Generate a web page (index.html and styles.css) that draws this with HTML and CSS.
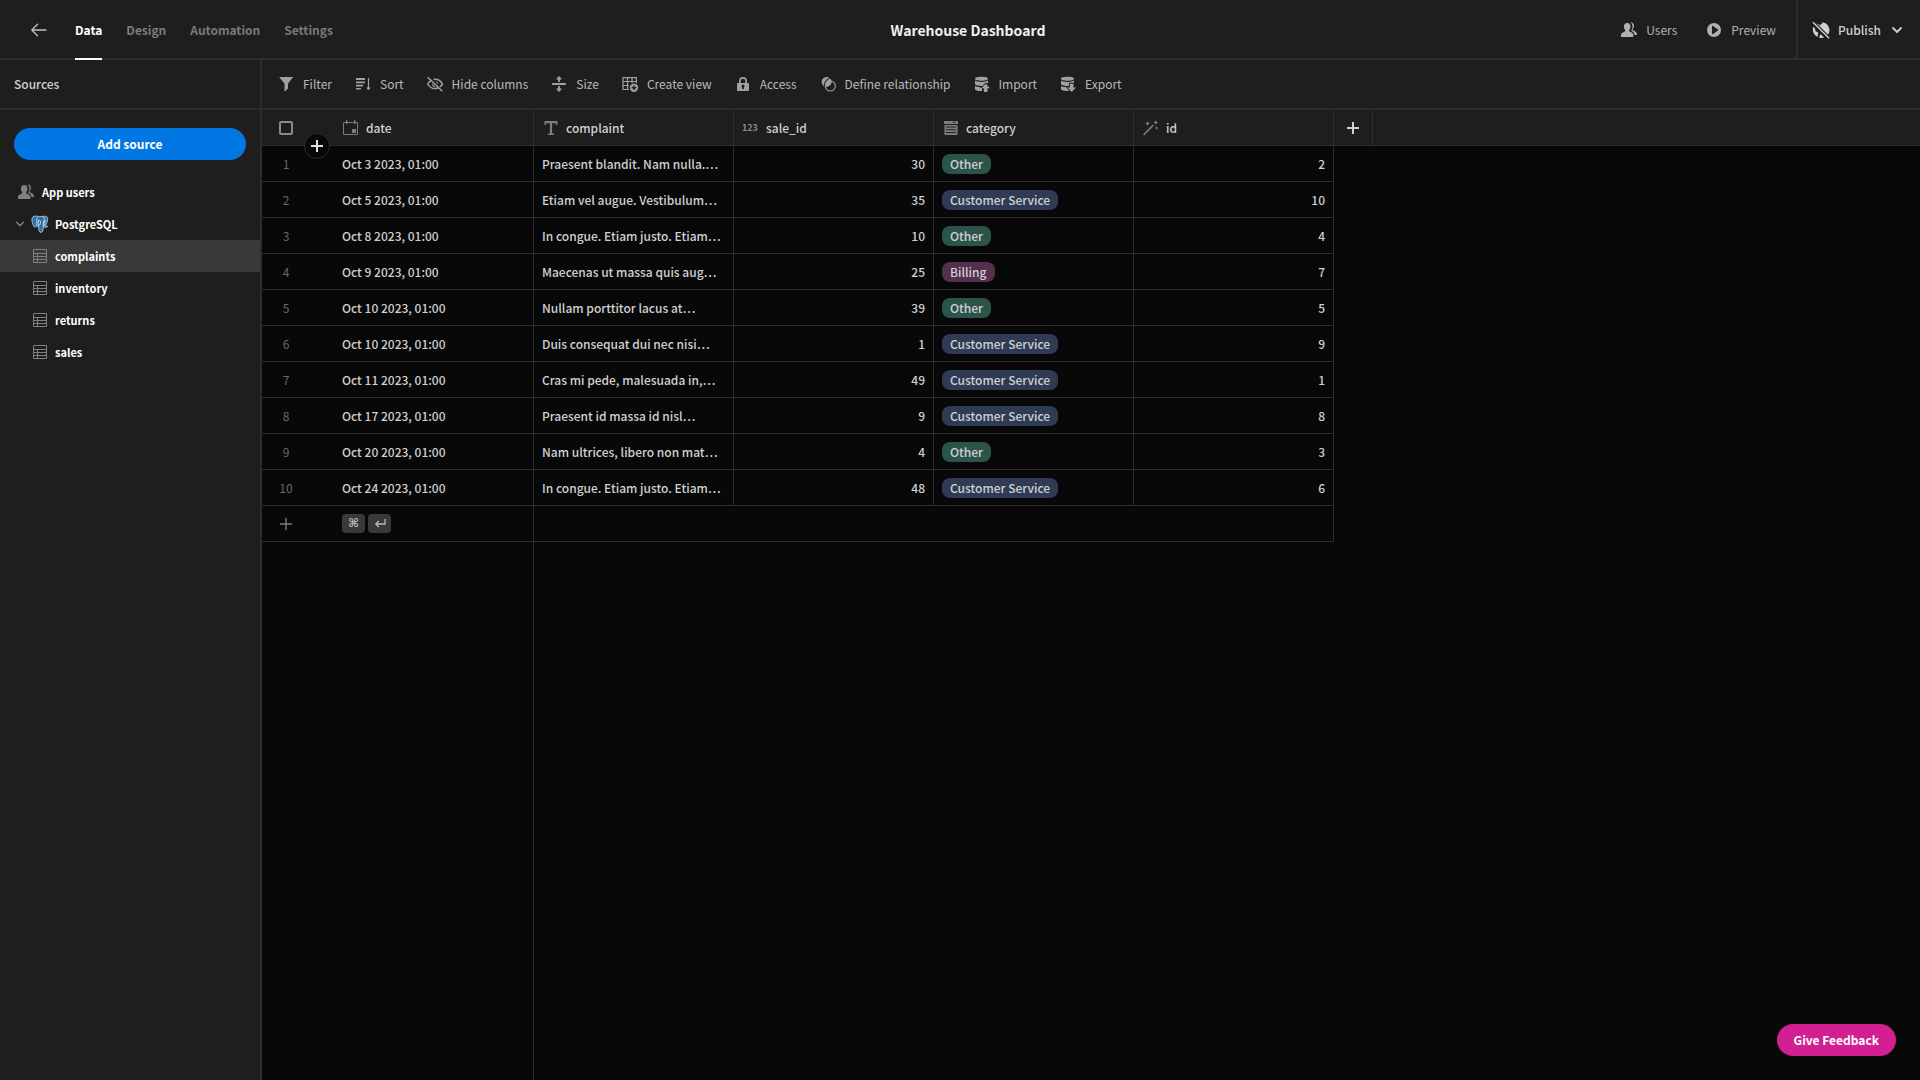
FILE: index.html
```html
<!DOCTYPE html>
<html lang="en">
<head>
<meta charset="utf-8">
<title>Warehouse Dashboard</title>
<link rel="stylesheet" href="styles.css">
</head>
<body>
<svg class="sprite" aria-hidden="true">
  <symbol id="i-users" viewBox="0 0 18 18">
    <path d="M7.300 2c2 0 3.200 1.300 3.200 3.600 0 1.400-.5 2.600-1.200 3.400-.3.400-.3 1.300.2 1.500 2.500.9 3.900 1.600 3.900 3.700V16H1v-1.800c0-2.100 1.500-2.800 3.900-3.700.6-.2.600-1.100.2-1.500-.7-.8-1.200-2-1.200-3.400C3.900 3.300 5.200 2 7.300 2z"/>
    <path d="M10.400 1.600c2.200-.3 3.600 1.100 3.600 3.300 0 1.300-.4 2.300-1.100 3.100-.4.500-.3 1.300.3 1.500 2.100.8 3.800 1.600 3.800 4v.5h-2.500c-.2-2.300-1.600-3.400-3.400-4.200.9-1 1.400-2.500 1.400-4.200 0-1.700-.7-3.100-2.100-4z"/>
  </symbol>
  <symbol id="i-table" viewBox="0 0 18 18">
    <path fill="none" stroke="currentColor" d="M2.500 2.500h13v13h-13zM2.500 6.500h13M2.500 9.500h13M2.500 12.500h13M6.500 6.500v9"/>
  </symbol>
  <symbol id="i-chevron" viewBox="0 0 12 12">
    <path fill="none" stroke="currentColor" stroke-width="1.800" stroke-linecap="round" stroke-linejoin="round" d="M2 4l4 4 4-4"/>
  </symbol>
  <symbol id="i-plus" viewBox="0 0 12 12"><path d="M5 0h2v5h5v2H7v5H5V7H0V5h5z"/></symbol>
</svg>

<header class="topbar">
  <nav class="tabs" aria-label="Builder">
    <a class="back" href="#" aria-label="Back"><svg width="16" height="14" viewBox="0 0 16 14"><path fill="none" stroke="currentColor" stroke-width="1.300" stroke-linecap="round" stroke-linejoin="round" d="M15 7H1M6.500 1.200L.8 7l5.700 5.800"/></svg></a>
    <a class="tab is-active" href="#">Data</a>
    <a class="tab" href="#">Design</a>
    <a class="tab" href="#">Automation</a>
    <a class="tab" href="#">Settings</a>
  </nav>
  <h1 class="title">Warehouse Dashboard</h1>
  <div class="actions">
    <button class="action"><svg class="icon"><use href="#i-users"/></svg>Users</button>
    <button class="action"><svg class="icon" viewBox="0 0 18 18"><path fill-rule="evenodd" d="M9 2a7 7 0 1 0 0 14A7 7 0 0 0 9 2zM7 5.200c0-.4.400-.6.700-.4L13 8.600c.3.200.3.600 0 .8l-5.300 3.800c-.3.200-.7 0-.7-.4z"/></svg>Preview</button>
    <button class="action publish"><svg class="icon" viewBox="0 0 18 18"><path d="M4.500 2.900L15.800 14A8 8 0 0 0 10 1.200c.9 1 .4 1.600-.8 1.700-.9.100-.3 1.500-1.400 1.500C6.900 4.400 6.500 1.900 4.500 2.900zM1.500 5.500A8 8 0 0 0 5.500 16c.6-1.200-.3-2 .6-3 .6-.7-.2-1.900-1.300-2.200-1.300-.4-1.800-1.400-1.300-2.300zM7.500 16.900c1.600.3 3.200.2 4.500-.4l-3.200-3.200c-.9.600-1.600 1.900-1.300 3.600z"/><path fill="none" stroke="currentColor" stroke-width="1.500" d="M1 1.200L17.200 17.200"/><path fill="none" stroke="#1e1e1e" stroke-width="1" d="M2.500 .8L17.500 15.700"/></svg>Publish<svg class="caret"><use href="#i-chevron"/></svg></button>
  </div>
</header>

<div class="workspace">
  <aside class="sidebar">
    <h2 class="side-head">Sources</h2>
    <button class="add-source">Add source</button>
    <nav class="sources" aria-label="Sources">
      <a class="source" href="#"><svg class="icon"><use href="#i-users"/></svg>App users</a>
      <a class="source group" href="#"><svg class="arrow"><use href="#i-chevron"/></svg><svg class="icon" viewBox="0 0 18 18"><path fill="#2a6fa5" stroke="#c9d3da" stroke-width=".8" d="M3.200 1.300C1.300 1.700.7 3.500 1 5.600c.3 2.300 1.300 5.600 2.600 6.400.8.500 1.500-.3 2.100-1 .7.500 1.300.600 2 .5-.1 2.200.2 5.900 2.200 5.900 2.100 0 2.200-2.700 2.400-5.200 1.700.2 3.500 0 4.500-.9-1-.1-1.900 0-2.500-.3 1.800-2.600 3.200-7.300 2-8.700-1.300-1.400-3.200-1.300-4.500-.8-1.200-.3-2.400-.3-3.400.2-1.600-.5-3.600-.8-5.200-.4z"/><path fill="none" stroke="#dce4ea" stroke-width=".9" d="M6.400 2.800C4.900 4.600 6.300 7.400 5.700 10.800M7.700 11.300c-.8-2.200-.3-3.700-.3-5.700 1-.6 2.100-.2 2.100 1 0 1.500-.2 2.700-.9 3.700M11.800 1.700c2 1.500 2.500 4 2.100 5.600-.2 1.200-.4 2.200.2 3.500M12.300 12V6c.7-.5 1.500-.3 1.700.3"/></svg>PostgreSQL</a>
      <a class="source child is-active" href="#"><svg class="icon"><use href="#i-table"/></svg>complaints</a>
      <a class="source child" href="#"><svg class="icon"><use href="#i-table"/></svg>inventory</a>
      <a class="source child" href="#"><svg class="icon"><use href="#i-table"/></svg>returns</a>
      <a class="source child" href="#"><svg class="icon"><use href="#i-table"/></svg>sales</a>
    </nav>
  </aside>

  <main class="content">
    <div class="toolbar">
      <button class="tool"><svg class="icon" viewBox="0 0 18 18"><path d="M2.700 2h12.900c.3 0 .4.300.2.500L11 8.600v5L8 16.400c-.2.200-.5.100-.5-.2V8.600L2.500 2.500c-.2-.2-.1-.5.200-.5z"/></svg>Filter</button>
      <button class="tool"><svg class="icon" viewBox="0 0 18 18"><path d="M2 3h9v2H2zM2 6.500h9v1.700H2zM2 9.700h7v1.700H2zM2 12.900h5v1.700H2z"/><path fill="none" stroke="currentColor" stroke-width="1.200" d="M14.500 3v11M12.900 12.500l1.600 1.800 1.600-1.800"/></svg>Sort</button>
      <button class="tool"><svg class="icon" viewBox="0 0 18 18"><path fill="none" stroke="currentColor" stroke-width="1.500" d="M5.700 5C3.800 5.900 2.500 7.500 1.700 9c1.500 2.700 4.200 4.600 7.400 4.600 1 0 2-.2 2.900-.6M7.500 4.500c3.900-.8 7.200 1.500 8.900 4.500-.7 1.200-1.600 2.200-2.600 3M1.700 2.200l14.600 14"/><path d="M9.200 6A3 3 0 0 1 12 9.200L10.700 8c.2-.9-.5-1.600-1.500-2zM6 8.400l3.600 3.500A3 3 0 0 1 6 8.400z"/></svg>Hide columns</button>
      <button class="tool"><svg class="icon" viewBox="0 0 18 18"><path d="M2.500 8h13c.7 0 .7 2 0 2h-13c-.7 0-.7-2 0-2zM9 1l3.200 3.500H9.900V7H8.100V4.500H5.800zM9 17l3.200-3.500H9.900V11H8.100v2.500H5.800z"/></svg>Size</button>
      <button class="tool"><svg class="icon" viewBox="0 0 18 18"><path fill="none" stroke="currentColor" stroke-width="1.200" d="M8 14.500H2V2.600h13.400V8M2 6.500h13.400M2 10.500h6M6.500 2.600v11.900M11 2.600V8"/><path fill-rule="evenodd" d="M13 8.600a4.200 4.200 0 1 0 0 8.400 4.200 4.200 0 0 0 0-8.400zm-.7 1.900h1.400v1.600h1.600v1.400h-1.600v1.600h-1.400v-1.600h-1.600v-1.400h1.600z"/></svg>Create view</button>
      <button class="tool"><svg class="icon" viewBox="0 0 18 18"><path fill-rule="evenodd" d="M14.500 8H13V6a4 4 0 0 0-8 0v2H3.500a.5.500 0 0 0-.5.500v7c0 .3.200.5.500.5h11c.3 0 .5-.2.500-.5v-7a.5.500 0 0 0-.5-.5zM6.700 6a2.300 2.300 0 0 1 4.600 0v2H6.700zM9.900 12.400V14H8.100v-1.600a1.500 1.500 0 1 1 1.800 0z"/></svg>Access</button>
      <button class="tool"><svg class="icon" viewBox="0 0 18 18"><path d="M10.700 3A5 5 0 1 0 5 11.200C4.700 7 7 4 10.700 3zM6.400 11.500a5 5 0 0 0 5.300-7.700 6 6 0 0 0-5.300 7.700z"/><circle cx="11.300" cy="11" r="5" fill="none" stroke="currentColor" stroke-width="1.100"/></svg>Define relationship</button>
      <button class="tool"><svg class="icon" viewBox="0 0 18 18"><path d="M8.500 1.700C12.400 1.700 15 2.500 15 3.700s-2.600 2-6.500 2-6.500-.8-6.500-2 2.600-2 6.500-2zM2 5.600c1 .9 3.500 1.400 6.500 1.400 2.900 0 5.500-.5 6.500-1.400v3L12.600 7.700 9.500 10.900C6 11 2.600 10.400 2 9.200zM2 11c1 .7 3 1.200 5.500 1.200L7 13h2v3c-3.500.2-7-.5-7-2z"/><path d="M12.700 8.700l4.300 4.600h-2.500V17h-3.600v-3.700H8.400z"/></svg>Import</button>
      <button class="tool"><svg class="icon" viewBox="0 0 18 18"><path d="M8.500 1.700C12.400 1.700 15 2.500 15 3.700s-2.600 2-6.500 2-6.500-.8-6.500-2 2.600-2 6.500-2zM2 5.600c1 .9 3.500 1.400 6.500 1.400 2.900 0 5.500-.5 6.500-1.400v2.100H10V11c-4 .1-7.400-.6-8-1.800zM2 11c1 .7 3 1.200 5.500 1.200l2.500 3.700c-4 .3-8-.4-8-1.900z"/><path d="M12.700 17l4.300-4.600h-2.500V8.700h-3.600v3.700H8.400z"/></svg>Export</button>
    </div>

    <table class="grid">
      <colgroup><col class="c-gutter"><col class="c-data"><col class="c-data"><col class="c-data"><col class="c-data"><col class="c-data"><col class="c-add"><col></colgroup>
      <thead>
        <tr>
          <th class="gutter"><input class="check" type="checkbox" aria-label="Select all rows"><button class="insert" aria-label="Add row"><svg class="plus-sm"><use href="#i-plus"/></svg></button></th>
          <th scope="col"><span class="head"><svg class="icon" viewBox="0 0 18 18"><path fill="none" stroke="currentColor" d="M1.500 3.500h14v12h-14z"/><path d="M4 1h1.400v4H4zM12 1h1.400v4H12zM10 10h4v4h-4z"/></svg>date</span></th>
          <th scope="col"><span class="head"><svg class="icon" viewBox="0 0 18 18"><path d="M2.500 2h13v4h-1.500l-.4-1.800h-3.500v10l2 .5V16H5.900v-1.300l2-.5v-10H4.400L4 6H2.500z"/></svg>complaint</span></th>
          <th scope="col"><span class="head"><span class="digits">123</span>sale_id</span></th>
          <th scope="col"><span class="head"><svg class="icon" viewBox="0 0 18 18"><path fill-rule="evenodd" d="M2 2h14v3H2zM10.500 2.700l1.500 1.500 1.500-1.500zM2.500 6h13v10h-13zM4 7.500v1h10v-1zM4 10.300v1h10v-1zM4 13.100v1h10v-1z"/></svg>category</span></th>
          <th scope="col"><span class="head"><svg class="icon" viewBox="0 0 18 18"><path fill="none" stroke="currentColor" stroke-width="1.700" d="M1.500 16L11.300 6.200"/><path d="M5.500 2l.8 1.800 1.900.7-1.900.8-.8 1.900-.7-1.900L3 4.500l1.800-.7zM13.800 1l.7 1.700 1.800.8-1.800.7-.7 1.800-.8-1.800-1.700-.7 1.700-.8zM14.600 7l.6 1.400 1.400.6-1.400.6-.6 1.400-.6-1.400-1.400-.6 1.400-.6z"/></svg>id</span></th>
          <th class="add-col"><button class="plain" aria-label="Add column"><svg class="plus"><use href="#i-plus"/></svg></button></th>
          <th class="rest"></th>
        </tr>
      </thead>
      <tbody>
        <tr><td class="gutter">1</td><td>Oct 3 2023, 01:00</td><td>Praesent blandit. Nam nulla.…</td><td class="num">30</td><td><span class="tag green">Other</span></td><td class="num">2</td></tr>
        <tr><td class="gutter">2</td><td>Oct 5 2023, 01:00</td><td>Etiam vel augue. Vestibulum…</td><td class="num">35</td><td><span class="tag blue">Customer Service</span></td><td class="num">10</td></tr>
        <tr><td class="gutter">3</td><td>Oct 8 2023, 01:00</td><td>In congue. Etiam justo. Etiam…</td><td class="num">10</td><td><span class="tag green">Other</span></td><td class="num">4</td></tr>
        <tr><td class="gutter">4</td><td>Oct 9 2023, 01:00</td><td>Maecenas ut massa quis aug…</td><td class="num">25</td><td><span class="tag purple">Billing</span></td><td class="num">7</td></tr>
        <tr><td class="gutter">5</td><td>Oct 10 2023, 01:00</td><td>Nullam porttitor lacus at…</td><td class="num">39</td><td><span class="tag green">Other</span></td><td class="num">5</td></tr>
        <tr><td class="gutter">6</td><td>Oct 10 2023, 01:00</td><td>Duis consequat dui nec nisi…</td><td class="num">1</td><td><span class="tag blue">Customer Service</span></td><td class="num">9</td></tr>
        <tr><td class="gutter">7</td><td>Oct 11 2023, 01:00</td><td>Cras mi pede, malesuada in,…</td><td class="num">49</td><td><span class="tag blue">Customer Service</span></td><td class="num">1</td></tr>
        <tr><td class="gutter">8</td><td>Oct 17 2023, 01:00</td><td>Praesent id massa id nisl…</td><td class="num">9</td><td><span class="tag blue">Customer Service</span></td><td class="num">8</td></tr>
        <tr><td class="gutter">9</td><td>Oct 20 2023, 01:00</td><td>Nam ultrices, libero non mat…</td><td class="num">4</td><td><span class="tag green">Other</span></td><td class="num">3</td></tr>
        <tr><td class="gutter">10</td><td>Oct 24 2023, 01:00</td><td>In congue. Etiam justo. Etiam…</td><td class="num">48</td><td><span class="tag blue">Customer Service</span></td><td class="num">6</td></tr>
        <tr><td class="gutter"><button class="plain dim" aria-label="Add row"><svg class="plus" viewBox="0 0 12 12"><path d="M5.300 0h1.400v5.300H12v1.400H6.700V12H5.300V6.700H0V5.300h5.300z"/></svg></button></td><td><span class="keys"><kbd>⌘</kbd><kbd><svg width="12" height="10" viewBox="0 0 12 10"><path fill="none" stroke="currentColor" stroke-width="1.300" d="M11 0v5H2M4.800 2L1.800 5l3 3"/></svg></kbd></span></td><td colspan="4"></td></tr>
      </tbody>
    </table>
    <div class="gridline"></div>
  </main>
</div>
<button class="feedback">Give Feedback</button>
</body>
</html>
```
FILE: styles.css
```css
* { box-sizing: border-box; }

body {
  margin: 0;
  min-height: 100vh;
  display: flex;
  flex-direction: column;
  background: #080808;
  color: #d0d0d0;
  font: 500 12px/20px "Noto Sans CJK SC", "Noto Sans", sans-serif;
}

a { color: inherit; text-decoration: none; }

button {
  margin: 0;
  padding: 0;
  border: 0;
  background: none;
  color: inherit;
  font: inherit;
  cursor: pointer;
}

svg { display: block; flex: none; fill: currentColor; }

.sprite { position: absolute; width: 0; height: 0; }
.icon { width: 18px; height: 18px; }

/* Top bar */
.topbar {
  display: grid;
  grid-template-columns: 1fr auto 1fr;
  height: 60px;
  padding-left: 16px;
  border-bottom: 2px solid #2c2c2c;
  background: #1e1e1e;
}

.tabs { display: flex; gap: 24px; padding-left: 15px; font-weight: 700; }
.back { display: flex; align-items: center; margin-right: 4px; color: #c0c0c0; }

.tab {
  display: flex;
  align-items: center;
  height: 60px;
  padding-top: 2px;
  border-bottom: 2px solid transparent;
  color: #7a7a7a;
}
.tab.is-active { border-color: #fff; color: #fff; }

.title { margin: 0; align-self: center; color: #f0f0f0; font-size: 14px; line-height: 22px; font-weight: 700; }

.actions { display: flex; justify-content: flex-end; font-weight: 400; color: #b0b0b0; }
.action { display: flex; align-items: center; gap: 8px; margin-right: 28px; }
.action + .action { margin-right: 20px; }
.actions .publish {
  margin: 0;
  padding: 0 17px 0 14px;
  border-left: 2px solid #2c2c2c;
  color: #d0d0d0;
  font-weight: 500;
}
.caret { width: 12px; height: 12px; margin-left: 2px; }

/* Sidebar */
.workspace { flex: 1; display: flex; }
.sidebar { flex: none; width: 262px; border-right: 2px solid #2c2c2c; background: #1e1e1e; }

.side-head {
  margin: 0 0 18px;
  padding: 14px;
  border-bottom: 2px solid #2c2c2c;
  font-size: 12px;
  font-weight: 500;
}

.add-source {
  display: block;
  width: calc(100% - 28px);
  height: 32px;
  margin: 0 14px 16px;
  border-radius: 16px;
  background: #0177e3;
  color: #fff;
  font-weight: 700;
}

.source {
  display: flex;
  align-items: center;
  gap: 7px;
  height: 32px;
  padding-left: 17px;
  color: #fff;
  font-size: 11px;
  font-weight: 700;
}
.source .icon { color: #808080; }
.source.group { gap: 6px; padding-left: 15px; }
.source.child { gap: 6px; padding-left: 31px; }
.source.is-active { background: #393939; }
.arrow { width: 10px; height: 10px; color: #808080; }

/* Toolbar */
.content { flex: 1; min-width: 0; display: flex; flex-direction: column; }

.toolbar {
  display: flex;
  gap: 22px;
  height: 50px;
  padding: 0 15px;
  border-bottom: 2px solid #2c2c2c;
  background: #1e1e1e;
  color: #b8b8b8;
  font-weight: 400;
}
.tool { display: flex; align-items: center; gap: 8px; white-space: nowrap; }
.tool .icon { color: #a0a0a0; }

/* Data grid */
.grid { width: 100%; table-layout: fixed; border-collapse: separate; border-spacing: 0; }
.c-gutter { width: 72px; }
.c-data { width: 200px; }
.c-add { width: 39px; }

.grid th, .grid td {
  height: 36px;
  padding: 0 8px;
  border-right: 1px solid #2c2c2c;
  border-bottom: 1px solid #2c2c2c;
  text-align: left;
  font-weight: 500;
  white-space: nowrap;
  overflow: hidden;
}
.grid th { background: #1e1e1e; }
.grid .rest { border-right: 0; }
.grid .num { text-align: right; }

.grid .gutter {
  position: relative;
  padding: 0 24px 0 0;
  border-right: 0;
  color: #6a6a6a;
  font-weight: 400;
  text-align: center;
  overflow: visible;
}

.head { display: flex; align-items: center; gap: 6px; }
.head .icon { color: #7c7c7c; }
.digits { width: 18px; color: #8a8a8a; font-size: 9px; font-weight: 700; }

.check {
  appearance: none;
  display: block;
  width: 14px;
  height: 14px;
  margin: 0 auto;
  border: 2px solid #8a8a8a;
  border-radius: 2px;
}

.insert {
  position: absolute;
  right: 4px;
  bottom: -14px;
  display: grid;
  place-items: center;
  width: 26px;
  height: 26px;
  border: 1px solid #2c2c2c;
  border-radius: 50%;
  background: #080808;
  color: #e0e0e0;
}
.plus-sm { width: 12px; height: 12px; }
.plus { width: 12px; height: 12px; }
.plain { display: block; margin: 0 auto; }
.dim { color: #7c7c7c; }

.tag {
  display: block;
  width: fit-content;
  padding: 0 8px;
  border-radius: 8px;
}
.green { background: #2d544b; }
.blue { background: #2f3b55; }
.purple { background: #552f50; }

.keys { display: flex; gap: 3px; }
kbd {
  display: grid;
  place-items: center;
  width: 23px;
  height: 19px;
  border-radius: 4px;
  background: #393939;
  color: #b8b8b8;
  font: 700 12px/19px "DejaVu Sans", sans-serif;
}

.gridline { flex: 1; width: 272px; border-right: 1px solid #2c2c2c; }

.feedback {
  position: fixed;
  right: 24px;
  bottom: 24px;
  height: 32px;
  padding: 0 17px;
  border-radius: 16px;
  background: #d22093;
  color: #fff;
  font-weight: 700;
}
```
